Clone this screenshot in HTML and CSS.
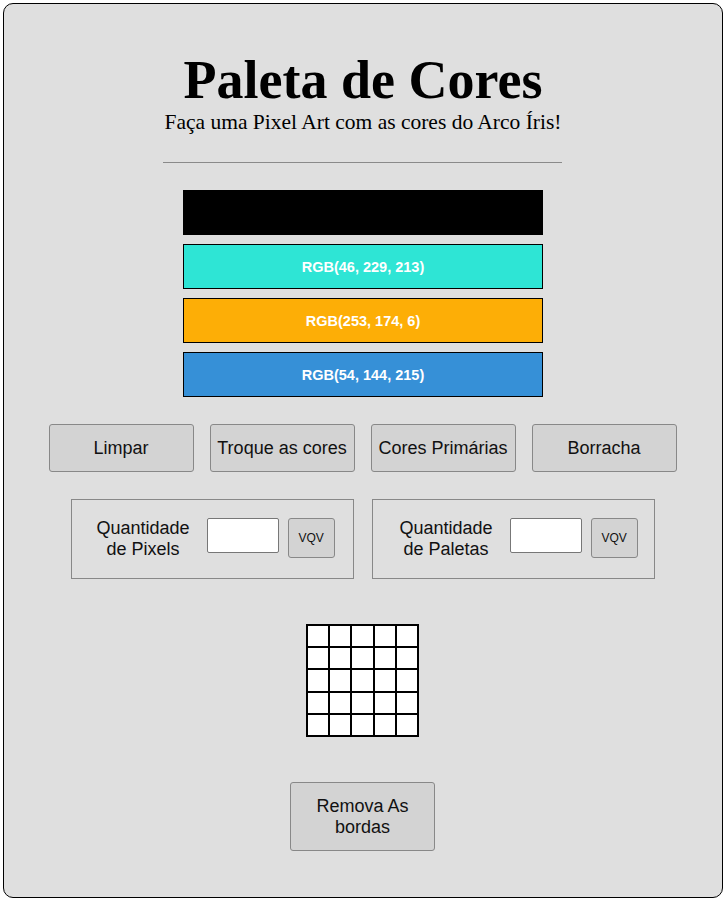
FILE: index.html
```html
<!DOCTYPE html>
<html lang="pt-BR">
<head>
<meta charset="utf-8">
<title>Paleta de Cores</title>
<link rel="stylesheet" href="styles.css">
</head>
<body>
<main class="app">
  <header class="header">
    <h1 class="title">Paleta de Cores</h1>
    <p class="subtitle">Faça uma Pixel Art com as cores do Arco Íris!</p>
  </header>
  <hr class="divider">
  <section class="palette">
    <div class="color color-black"></div>
    <div class="color color-cyan">RGB(46, 229, 213)</div>
    <div class="color color-orange">RGB(253, 174, 6)</div>
    <div class="color color-blue">RGB(54, 144, 215)</div>
  </section>
  <section class="actions">
    <button class="btn">Limpar</button>
    <button class="btn">Troque as cores</button>
    <button class="btn">Cores Primárias</button>
    <button class="btn">Borracha</button>
  </section>
  <section class="controls">
    <div class="control">
      <label class="control-label">Quantidade<br>de Pixels</label>
      <input class="control-input" type="text">
      <button class="vqv">VQV</button>
    </div>
    <div class="control control-second">
      <label class="control-label">Quantidade<br>de Paletas</label>
      <input class="control-input" type="text">
      <button class="vqv">VQV</button>
    </div>
  </section>
  <section class="board">
    <div class="pixel"></div><div class="pixel"></div><div class="pixel"></div><div class="pixel"></div><div class="pixel"></div>
    <div class="pixel"></div><div class="pixel"></div><div class="pixel"></div><div class="pixel"></div><div class="pixel"></div>
    <div class="pixel"></div><div class="pixel"></div><div class="pixel"></div><div class="pixel"></div><div class="pixel"></div>
    <div class="pixel"></div><div class="pixel"></div><div class="pixel"></div><div class="pixel"></div><div class="pixel"></div>
    <div class="pixel"></div><div class="pixel"></div><div class="pixel"></div><div class="pixel"></div><div class="pixel"></div>
  </section>
  <button class="btn btn-borders">Remova As<br>bordas</button>
</main>
</body>
</html>
```

FILE: styles.css
```css
* { box-sizing: border-box; }

html, body {
  margin: 0;
  padding: 0;
  background: #ffffff;
}

body {
  padding: 3px;
}

.app {
  width: 720px;
  height: 895px;
  background: #dfdfdf;
  border: 1px solid #000;
  border-radius: 10px;
  display: flex;
  flex-direction: column;
  align-items: center;
  font-family: "Liberation Sans", Arial, sans-serif;
  color: #111;
}

.header {
  margin-top: 46px;
  text-align: center;
  font-family: "Liberation Serif", "Times New Roman", serif;
}

.title {
  margin: 0;
  font-size: 54px;
  font-weight: bold;
  line-height: 60px;
  color: #000;
}

.subtitle {
  margin: 0;
  font-size: 21.5px;
  line-height: 25px;
  color: #000;
}

.divider {
  width: 399px;
  margin: 27px 0 0 -1px;
  border: 0;
  border-top: 1px solid #8a8a8a;
  height: 0;
}

.palette {
  margin-top: 27px;
  display: flex;
  flex-direction: column;
  gap: 9px;
}

.color {
  width: 360px;
  height: 45px;
  border: 1px solid #000;
  display: flex;
  align-items: center;
  justify-content: center;
  color: #ffffff;
  font-weight: bold;
  font-size: 14.5px;
}

.color-black { background: #000; }
.color-cyan { background: rgb(46, 229, 213); }
.color-orange { background: rgb(253, 174, 6); }
.color-blue { background: rgb(54, 144, 215); }

.actions {
  margin-top: 27px;
  display: flex;
  gap: 16px;
  margin-left: -1px;
}

.btn {
  width: 145px;
  height: 48px;
  background: #d3d3d3;
  border: 1px solid #888;
  border-radius: 3px;
  font-family: "Liberation Sans", Arial, sans-serif;
  font-size: 18px;
  color: #111;
  padding: 0;
}

.controls {
  margin-top: 27px;
  display: flex;
  gap: 18px;
  margin-left: -1px;
}

.control {
  width: 283px;
  height: 80px;
  border: 1px solid #888;
  display: flex;
  align-items: flex-start;
  padding-left: 25px;
}

.control-second {
  padding-left: 27px;
}

.control-label {
  align-self: center;
  text-align: center;
  font-size: 18px;
  line-height: 21px;
  color: #111;
}

.control-input {
  margin-top: 18px;
  margin-left: 17px;
  width: 72px;
  height: 35px;
  background: #fff;
  border: 1px solid #777;
  border-radius: 2px;
}

.vqv {
  margin-top: 18px;
  margin-left: 9px;
  width: 47px;
  height: 40px;
  background: #d3d3d3;
  border: 1px solid #888;
  border-radius: 3px;
  font-family: "Liberation Sans", Arial, sans-serif;
  font-size: 12px;
  color: #111;
  padding: 0;
}

.board {
  margin-top: 45px;
  margin-left: -1px;
  width: 113px;
  height: 113px;
  background: #000;
  padding: 2px;
  display: grid;
  grid-template-columns: repeat(5, 1fr);
  grid-template-rows: repeat(5, 1fr);
  gap: 2px;
}

.pixel {
  background: #fff;
}

.btn-borders {
  margin-top: 45px;
  margin-left: -1px;
  height: 69px;
  line-height: 21px;
}
```
